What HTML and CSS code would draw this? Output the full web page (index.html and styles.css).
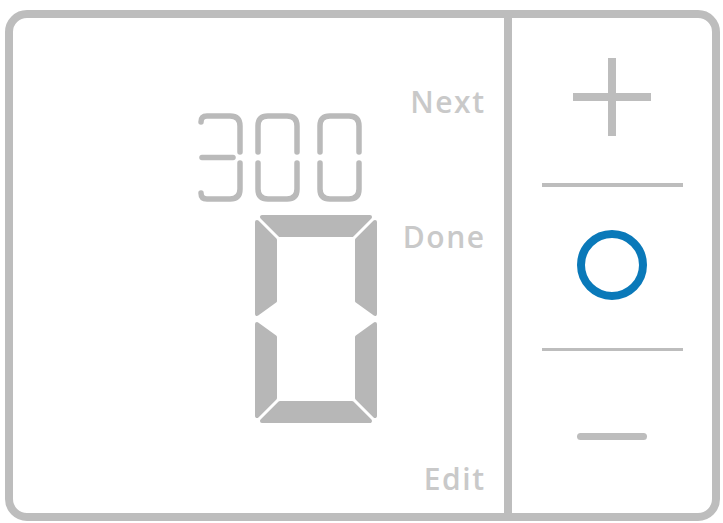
FILE: index.html
```html
<!doctype html>
<html lang="en">
	<head>
		<meta charset="utf-8" />
		<title>Thermostat</title>
		<link rel="stylesheet" href="styles.css">
	</head>
	<body>
		<div class="frame">
			<div class="screen">
				<div class="digits">
					<!-- small three-digit readout -->
					<svg class="small" width="165" height="89" viewBox="0 0 165 89">
						<g class="thin">
							<path d="M3,9 Q3,3 9,3 H32 Q42,3 42,13 V39" />
							<path d="M4,44.5 H35" />
							<path d="M42,50 V76 Q42,86 32,86 H9 Q3,86 3,80" />
						</g>
						<g class="thin" transform="translate(57,0)">
							<path d="M3,39 V13 Q3,3 13,3 H32 Q42,3 42,13 V39" />
							<path d="M3,50 V76 Q3,86 13,86 H32 Q42,86 42,76 V50" />
						</g>
						<g class="thin" transform="translate(119,0)">
							<path d="M3,39 V13 Q3,3 13,3 H32 Q42,3 42,13 V39" />
							<path d="M3,50 V76 Q3,86 13,86 H32 Q42,86 42,76 V50" />
						</g>
					</svg>
					<!-- big seven segment digit -->
					<svg class="big" width="122" height="208" viewBox="0 0 122 208">
						<g class="seg">
							<polygon points="7,2 115,2 97,20 25,20" />
							<polygon points="2,7 20,25 20,86 2,99" />
							<polygon points="2,109 20,122 20,183 2,201" />
							<polygon points="120,7 102,25 102,86 120,99" />
							<polygon points="120,109 102,122 102,183 120,201" />
							<polygon points="25,188 97,188 115,206 7,206" />
						</g>
					</svg>
				</div>
				<div class="labels">
					<span class="label">Next</span>
					<span class="label done">Done</span>
					<span class="label edit">Edit</span>
				</div>
			</div>
			<div class="keys">
				<svg class="plus" width="78" height="78" viewBox="0 0 78 78">
					<rect x="35" y="0" width="8" height="78" />
					<rect x="0" y="35" width="78" height="8" />
				</svg>
				<div class="rule"></div>
				<svg class="ok" width="70" height="70" viewBox="0 0 70 70">
					<circle cx="35" cy="35" r="31" />
				</svg>
				<div class="rule thin-rule"></div>
				<div class="minus"></div>
			</div>
		</div>
	</body>
</html>
```

FILE: styles.css
```css
body {
	margin: 0;
	background-color: #fff;
	overflow: hidden;
	font-family: "Open Sans", "DejaVu Sans", sans-serif;
}

.frame {
	display: flex;
	height: 511px;
	margin: 10px 3px 0 5px;
	box-sizing: border-box;
	border: 8px solid #bdbdbd;
	border-radius: 22px;
}

/* left part: readout and soft labels */

.screen {
	flex: 1;
	display: flex;
}

.digits {
	flex: 1;
	padding: 95px 0 0 185px;
}

.digits svg {
	display: block;
}

.digits .big {
	margin: 13px 0 0 57px;
}

.thin path {
	fill: none;
	stroke: #bababa;
	stroke-width: 5.5;
	stroke-linecap: round;
	stroke-linejoin: round;
}

.seg polygon {
	fill: #b7b7b7;
	stroke: #b7b7b7;
	stroke-width: 4;
	stroke-linejoin: round;
}

.labels {
	display: flex;
	flex-direction: column;
	align-items: flex-end;
	padding: 69px 20px 19px 0;
}

.label {
	display: block;
	font-size: 30px;
	font-weight: 600;
	line-height: 30px;
	letter-spacing: 1.5px;
	margin-right: -1.5px;
	color: #c9c9c9;
}

.label.done {
	margin-top: 105px;
}

.label.edit {
	margin-top: auto;
}

/* right part: plus / ok / minus keys */

.keys {
	width: 200px;
	display: flex;
	flex-direction: column;
	align-items: center;
	padding-top: 40px;
	border-left: 8px solid #bdbdbd;
}

.keys svg {
	display: block;
}

.plus rect {
	fill: #bdbdbd;
}

.rule {
	width: 141px;
	height: 4px;
	margin-top: 47px;
	background-color: #bdbdbd;
}

.ok {
	margin-top: 43px;
}

.ok circle {
	fill: none;
	stroke: #0a79b9;
	stroke-width: 8;
}

.rule.thin-rule {
	height: 3px;
	margin-top: 48px;
}

.minus {
	width: 70px;
	height: 7px;
	margin-top: 82px;
	border-radius: 4px;
	background-color: #bdbdbd;
}
```
